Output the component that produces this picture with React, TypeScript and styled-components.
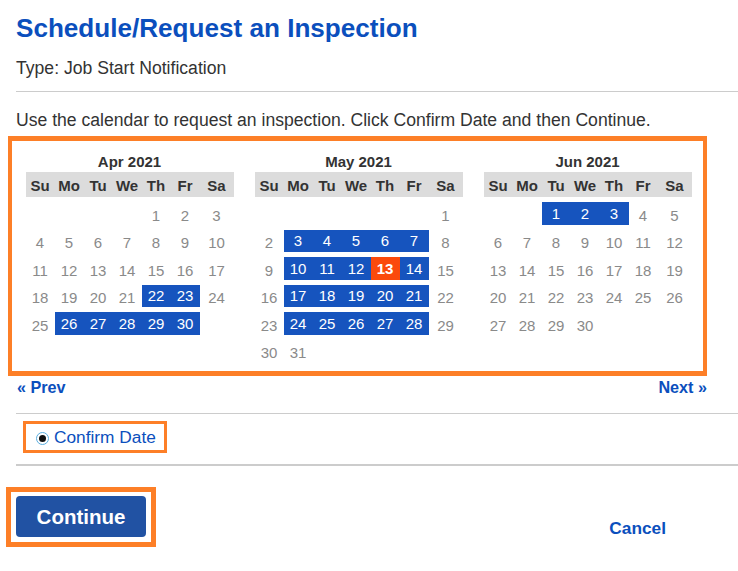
import React from 'react';
import styled, { createGlobalStyle } from 'styled-components';

const BLUE = '#0b4fbd';
const ORANGE = '#fd7f27';

const Global = createGlobalStyle`
  html, body { margin: 0; padding: 0; background: #fff; }
  body { font-family: "Liberation Sans", Arial, sans-serif; color: #333; }
`;

const Page = styled.div`
  width: 738px;
  box-sizing: border-box;
  padding: 13px 0 20px 16px;
  display: flex;
  flex-direction: column;
`;

const Title = styled.h1`
  margin: 0;
  font-size: 26.1px;
  line-height: 30px;
  font-weight: bold;
  color: ${BLUE};
`;

const Text = styled.p<{ $mt: number }>`
  margin: ${(p) => p.$mt}px 0 0;
  font-size: 17.6px;
  line-height: 20px;
  color: #333;
`;

const Rule = styled.div<{ $mt: number; $h?: number }>`
  margin-top: ${(p) => p.$mt}px;
  height: ${(p) => p.$h ?? 1}px;
  background: #cccccc;
`;

const CalBox = styled.div`
  margin: 6px 0 0 -8px;
  width: 699px;
  box-sizing: border-box;
  border: 5px solid ${ORANGE};
  border-left-width: 4.5px;
  border-right-width: 4.5px;
  padding: 11px 10px 9px 13.5px;
  display: flex;
  align-items: flex-start;
  gap: 21px;
`;

const Month = styled.div`
  width: 208px;
  display: flex;
  flex-direction: column;
`;

const MonthTitle = styled.div`
  font-size: 15px;
  line-height: 20px;
  font-weight: bold;
  text-align: center;
  color: #333;
`;

const Grid = styled.div`
  display: grid;
  grid-template-columns: repeat(6, 29px) 1fr;
`;

const HeadRow = styled(Grid)`
  background: #dcdcdc;
  height: 25px;
`;

const HeadCell = styled.div`
  font-size: 15px;
  font-weight: bold;
  line-height: 25px;
  padding-top: 1px;
  text-align: center;
  color: #333;
`;

const Days = styled(Grid)`
  margin-top: 5px;
  row-gap: 5px;
  grid-auto-rows: 22.5px;
`;

type Kind = 'plain' | 'sel' | 'today' | 'empty';

const Day = styled.div<{ $kind: Kind }>`
  display: flex;
  align-items: center;
  justify-content: center;
  font-size: 15px;
  box-sizing: border-box;
  padding-top: ${(p) => (p.$kind === 'plain' ? '4px' : '0')};
  color: ${(p) => (p.$kind === 'plain' ? '#8a8a8a' : '#fff')};
  font-weight: ${(p) => (p.$kind === 'today' ? 'bold' : 'normal')};
  background: ${(p) =>
    p.$kind === 'sel' ? '#1654be' : p.$kind === 'today' ? '#fb4a0c' : 'transparent'};
`;

const Nav = styled.div`
  margin-top: 1px;
  width: 691px;
  padding-left: 1px;
  box-sizing: border-box;
  display: flex;
  justify-content: space-between;
`;

const Link = styled.a`
  font-size: 16.2px;
  line-height: 20px;
  font-weight: bold;
  color: ${BLUE};
  text-decoration: none;
`;

const ConfirmBox = styled.label`
  align-self: flex-start;
  margin: 7px 0 0 7px;
  border: 3px solid ${ORANGE};
  padding: 3px 8px 3px 10px;
  display: flex;
  align-items: center;
  gap: 5px;
  font-size: 17.3px;
  line-height: 20px;
  color: ${BLUE};
`;

const Radio = styled.span`
  width: 13px;
  height: 13px;
  box-sizing: border-box;
  border-radius: 50%;
  border: 1.5px solid #5aaee0;
  background: #fff;
  display: flex;
  align-items: center;
  justify-content: center;
  margin-top: 2px;
  &::after {
    content: '';
    width: 7px;
    height: 7px;
    border-radius: 50%;
    background: #111;
  }
`;

const Footer = styled.div`
  margin: 21px 0 0 -10px;
  display: flex;
  align-items: flex-end;
`;

const ContinueFrame = styled.div`
  border: 5px solid ${ORANGE};
  padding: 4px 5px 5px 5px;
`;

const Button = styled.button`
  width: 130px;
  height: 41px;
  border: none;
  border-radius: 4px;
  background: #2152a3;
  color: #fff;
  font-family: "Liberation Sans", Arial, sans-serif;
  font-size: 20.5px;
  font-weight: bold;
  display: flex;
  align-items: center;
  justify-content: center;
  padding: 0;
`;

const Cancel = styled(Link)`
  margin: 0 72px 9px auto;
  font-size: 17.3px;
`;

const WEEK = ['Su', 'Mo', 'Tu', 'We', 'Th', 'Fr', 'Sa'];

type MonthData = { name: string; start: number; days: number; sel: number[]; today?: number };

const range = (a: number, b: number) => Array.from({ length: b - a + 1 }, (_, i) => a + i);

const MONTHS: MonthData[] = [
  { name: 'Apr 2021', start: 4, days: 30, sel: [22, 23, ...range(26, 30)] },
  {
    name: 'May 2021',
    start: 6,
    days: 31,
    sel: [...range(3, 7), 10, 11, 12, 14, ...range(17, 21), ...range(24, 28)],
    today: 13,
  },
  { name: 'Jun 2021', start: 2, days: 30, sel: [1, 2, 3] },
];

const Calendar: React.FC<{ m: MonthData }> = ({ m }) => (
  <Month>
    <MonthTitle>{m.name}</MonthTitle>
    <HeadRow>
      {WEEK.map((w) => (
        <HeadCell key={w}>{w}</HeadCell>
      ))}
    </HeadRow>
    <Days>
      {Array.from({ length: m.start }, (_, i) => (
        <Day key={'e' + i} $kind="empty" />
      ))}
      {range(1, m.days).map((d) => (
        <Day
          key={d}
          $kind={d === m.today ? 'today' : m.sel.includes(d) ? 'sel' : 'plain'}
        >
          {d}
        </Day>
      ))}
    </Days>
  </Month>
);

export default function App() {
  return (
    <>
      <Global />
      <Page>
        <Title>Schedule/Request an Inspection</Title>
        <Text $mt={15}>Type: Job Start Notification</Text>
        <Rule $mt={13} />
        <Text $mt={18}>
          Use the calendar to request an inspection. Click Confirm Date and then Continue.
        </Text>
        <CalBox>
          {MONTHS.map((m) => (
            <Calendar key={m.name} m={m} />
          ))}
        </CalBox>
        <Nav>
          <Link href="#">« Prev</Link>
          <Link href="#">Next »</Link>
        </Nav>
        <Rule $mt={16} />
        <ConfirmBox>
          <Radio />
          Confirm Date
        </ConfirmBox>
        <Rule $mt={11} $h={2} />
        <Footer>
          <ContinueFrame>
            <Button>Continue</Button>
          </ContinueFrame>
          <Cancel href="#">Cancel</Cancel>
        </Footer>
      </Page>
    </>
  );
}
